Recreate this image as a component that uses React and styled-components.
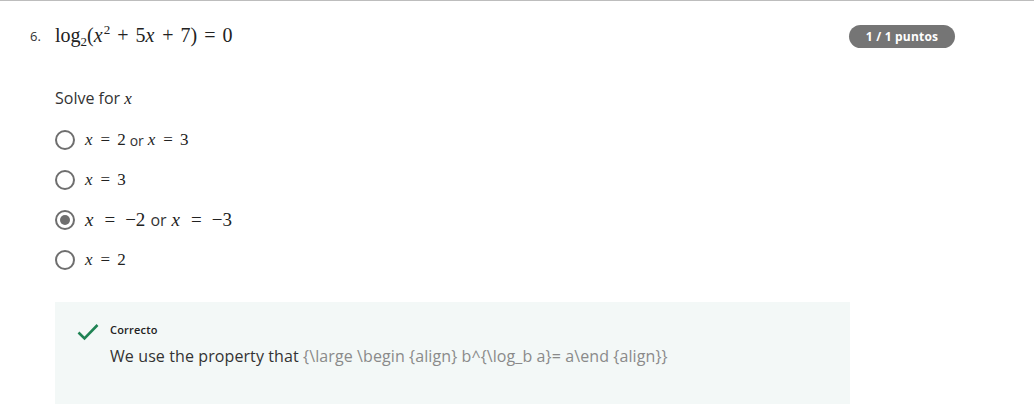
import React from "react";
import styled, { createGlobalStyle } from "styled-components";

const Global = createGlobalStyle`
  html, body { margin: 0; padding: 0; background: #fff; }
  body { font-family: "Open Sans", "Noto Sans", sans-serif; color: #333; }
`;

const Page = styled.div`
  border-top: 1px solid #bdbdbd;
  padding: 0 79px 0 30px;
  height: 403px;
  overflow: hidden;
`;

const Header = styled.div`
  display: flex;
  align-items: center;
  margin-top: 23px;
  height: 24px;
`;

const QNum = styled.span`
  width: 25px;
  font-size: 13px;
  color: #333;
  font-family: "Open Sans", sans-serif;
`;

const Math = styled.span`
  font-family: "Liberation Serif", "DejaVu Serif", serif;
  font-size: ${(p) => p.size || 17}px;
  color: #222;
  white-space: nowrap;
`;

const V = styled.i`
  font-style: italic;
  padding-right: 1px;
`;

const Op = styled.span`
  margin: 0 ${(p) => p.gap || 5}px;
`;

const Badge = styled.span`
  margin-left: auto;
  background: #757575;
  color: #fff;
  font-weight: 700;
  font-size: 12px;
  border-radius: 12px;
  height: 23px;
  line-height: 23px;
  width: 106px;
  text-align: center;
  letter-spacing: 0.2px;
`;

const Body = styled.div`
  padding-left: 25px;
`;

const Prompt = styled.div`
  margin-top: 38px;
  font-size: 16px;
  line-height: 24px;
  color: #333;
`;

const Options = styled.div`
  margin-top: 9px;
  display: flex;
  flex-direction: column;
`;

const Option = styled.label`
  display: flex;
  align-items: center;
  height: 40px;
`;

const Radio = styled.span`
  box-sizing: border-box;
  width: 20px;
  height: 20px;
  border-radius: 50%;
  border: 2px solid #6e6e6e;
  display: flex;
  align-items: center;
  justify-content: center;
  margin-right: 10px;
  &::after {
    content: "";
    width: 10px;
    height: 10px;
    border-radius: 50%;
    background: ${(p) => (p.checked ? "#6e6e6e" : "transparent")};
  }
`;

const Word = styled.span`
  font-family: "Open Sans", sans-serif;
  font-size: ${(p) => p.size || 14}px;
  color: #333;
  margin: 0 ${(p) => p.gap || 3}px;
`;

const Feedback = styled.div`
  margin-top: 22px;
  width: 795px;
  height: 110px;
  background: #f3f8f7;
  display: flex;
  padding: 21px 0 0 22px;
  box-sizing: border-box;
`;

const Check = styled.svg`
  width: 22px;
  height: 18px;
  flex: none;
`;

const FBText = styled.div`
  margin-left: 11px;
  display: flex;
  flex-direction: column;
`;

const FBTitle = styled.div`
  font-size: 11px;
  font-weight: 600;
  color: #222;
  line-height: 14px;
  letter-spacing: 0.2px;
`;

const FBBody = styled.div`
  margin-top: 7px;
  font-size: 16px;
  line-height: 24px;
  color: #333;
  letter-spacing: 0.1px;
`;

const Raw = styled.span`
  color: #8a8a8a;
`;

const Eq = ({ v, n, size, gap }) => (
  <Math size={size}>
    <V>{v}</V>
    <Op gap={gap}>=</Op>
    {n}
  </Math>
);

export default function App() {
  return (
    <>
      <Global />
      <Page>
        <Header>
          <QNum>6.</QNum>
          <Math size={20}>
            log<sub style={{ fontSize: 13, verticalAlign: -4 }}>2</sub>(<V>x</V>
            <sup style={{ fontSize: 13, verticalAlign: 8 }}>2</sup>
            <Op gap={7}>+</Op>5<V>x</V>
            <Op gap={7}>+</Op>7)
            <Op gap={7}>=</Op>0
          </Math>
          <Badge>1 / 1 puntos</Badge>
        </Header>
        <Body>
          <Prompt>
            Solve for <Math size={17}><V>x</V></Math>
          </Prompt>
          <Options>
            <Option>
              <Radio />
              <Eq v="x" n="2" size={17} gap={7} />
              <Word gap={4}>or</Word>
              <Eq v="x" n="3" size={17} gap={7} />
            </Option>
            <Option>
              <Radio />
              <Eq v="x" n="3" size={17} gap={7} />
            </Option>
            <Option>
              <Radio checked />
              <Eq v="x" n="−2" size={19} gap={10} />
              <Word size={16} gap={5}>or</Word>
              <Eq v="x" n="−3" size={19} gap={10} />
            </Option>
            <Option>
              <Radio />
              <Eq v="x" n="2" size={17} gap={7} />
            </Option>
          </Options>
          <Feedback>
            <Check viewBox="0 0 22 18">
              <polyline points="1.5,9.5 7.5,15.5 20.5,2" fill="none" stroke="#1f8354" strokeWidth="2.6" />
            </Check>
            <FBText>
              <FBTitle>Correcto</FBTitle>
              <FBBody>
                We use the property that{" "}
                <Raw>{"{\\large \\begin {align} b^{\\log_b a}= a\\end {align}}"}</Raw>
              </FBBody>
            </FBText>
          </Feedback>
        </Body>
      </Page>
    </>
  );
}
